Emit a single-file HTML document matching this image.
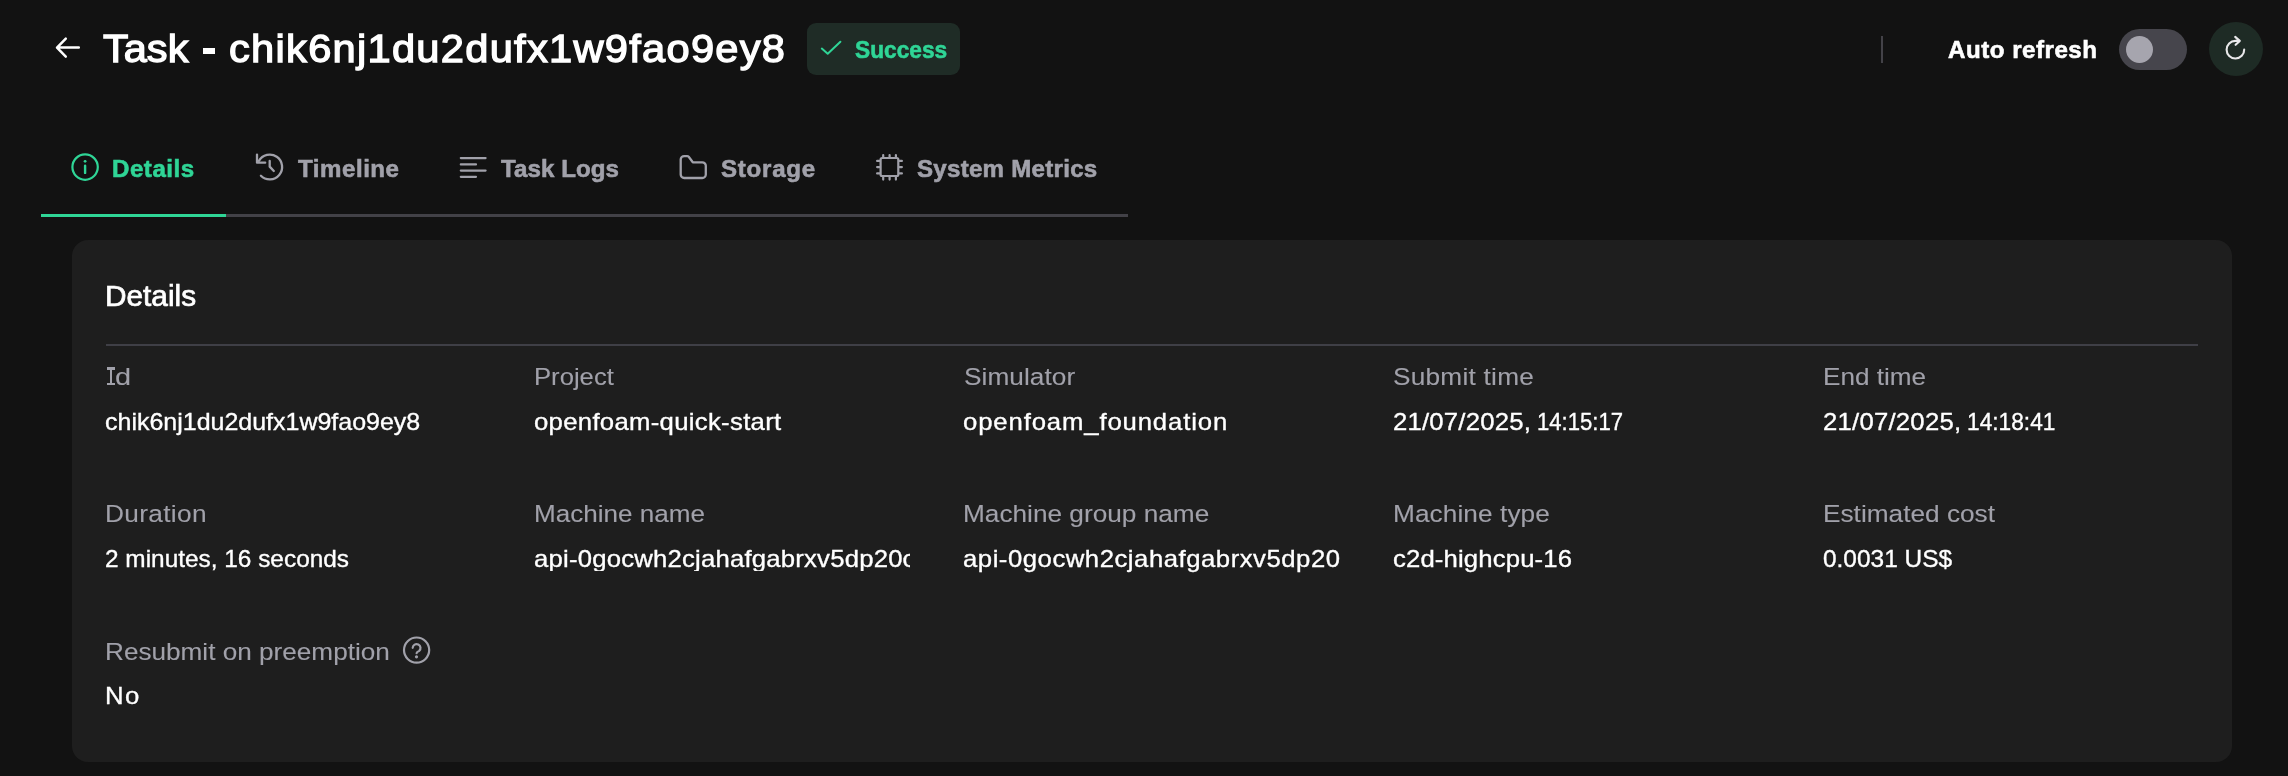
<!DOCTYPE html>
<html><head><meta charset="utf-8"><title>Task</title>
<style>
html,body{margin:0;padding:0;background:#121212;}
body{width:2288px;height:776px;position:relative;overflow:hidden;font-family:"Liberation Sans",sans-serif;}
.t{position:absolute;white-space:nowrap;line-height:1;display:block;will-change:transform;}
.t span{display:inline-block;transform-origin:0 50%;line-height:1;}
.a{position:absolute;display:block;}
</style></head><body>
<!-- title hyphen -->
<div class="a" style="left:202.8px;top:48.3px;width:12.5px;height:5.4px;background:#fff"></div>
<!-- success badge -->
<div class="a" style="left:807px;top:23px;width:153px;height:52px;border-radius:9px;background:#1f2c26"></div>
<!-- separator -->
<div class="a" style="left:1881px;top:36px;width:2px;height:27px;background:#434248"></div>
<!-- toggle -->
<div class="a" style="left:2119px;top:29px;width:68px;height:41px;border-radius:20.5px;background:#46454c"></div>
<div class="a" style="left:2126px;top:36px;width:27px;height:27px;border-radius:50%;background:#a6a5ae"></div>
<!-- refresh button -->
<div class="a" style="left:2209px;top:22px;width:54px;height:54px;border-radius:50%;background:#1e2b25"></div>
<!-- tab underline -->
<div class="a" style="left:41px;top:213.5px;width:1087px;height:3px;background:#424147"></div>
<div class="a" style="left:41px;top:213.5px;width:185px;height:3px;background:#2fd596"></div>
<!-- card -->
<div class="a" style="left:72px;top:240px;width:2160px;height:522px;border-radius:16px;background:#1e1e1e"></div>
<div class="a" style="left:106px;top:344px;width:2092px;height:2px;background:#3f3f46"></div>
<!-- slab I of "Id" -->
<div class="a" style="left:106.8px;top:367.3px;width:8.4px;height:2.3px;background:#a1a1aa"></div>
<div class="a" style="left:106.8px;top:382.9px;width:8.4px;height:2.3px;background:#a1a1aa"></div>
<div class="a" style="left:109.8px;top:367.3px;width:2.5px;height:17.9px;background:#a1a1aa"></div>
<!-- icons -->
<svg class="a" style="left:0;top:0" width="2288" height="776" viewBox="0 0 2288 776" fill="none" stroke-linecap="round" stroke-linejoin="round">
<!-- back arrow -->
<path d="M78.8 47.6H57.2M65.8 38.6L57 47.6L65.8 56.6" stroke="#fff" stroke-width="2.5"/>
<!-- check -->
<path d="M821.8 48.6L827.7 53.8L840.4 41.8" stroke="#2fd596" stroke-width="2"/>
<!-- refresh icon -->
<path d="M2244.2 49.5A8.8 8.8 0 1 1 2235.4 40.9H2239.6M2235.2 36.9L2239.8 40.9L2235.6 44.8" stroke="#e8e8ea" stroke-width="2.1"/>
<!-- info -->
<g stroke="#2fd596" stroke-width="2.2"><circle cx="85.1" cy="167.1" r="12.7"/><path d="M85.1 165.7V172.9" stroke-width="2.4"/><circle cx="85.1" cy="161.3" r="1.4" fill="#2fd596" stroke="none"/></g>
<!-- history -->
<g stroke="#a1a1aa" stroke-width="2.3"><path d="M258.9 160.9A12.4 12.4 0 1 1 260.9 175.7"/><path d="M257 154.6V162.7H265.2"/><path d="M269.7 160.9V166.6L273.8 171"/></g>
<!-- logs -->
<path d="M460.8 158.1H485.6M460.8 164.4H476M460.8 170.6H485.6M460.8 176.8H476" stroke="#a1a1aa" stroke-width="2.2"/>
<!-- folder -->
<path d="M680.7 159.6a3.5 3.5 0 0 1 3.5-3.5H687.2a2 2 0 0 1 1.5.7L692.8 162.3H702.3a3.5 3.5 0 0 1 3.5 3.5V174.5a3.5 3.5 0 0 1-3.5 3.5H684.2a3.5 3.5 0 0 1-3.5-3.5Z" stroke="#a1a1aa" stroke-width="2.3"/>
<!-- cpu -->
<g stroke="#a1a1aa" stroke-width="2.2"><rect x="880.6" y="158" width="17.7" height="18" rx="1.5"/><path d="M883.2 155V157M889.6 155V157M895.9 155V157M883.2 177.2V179.6M889.6 177.2V179.6M895.9 177.2V179.6M877.1 160.9H879.5M877.1 167.1H879.5M877.1 173.4H879.5M899.5 160.9H901.9M899.5 167.1H901.9M899.5 173.4H901.9"/></g>
<!-- help -->
<g stroke="#a1a1aa" stroke-width="2.2"><circle cx="416.6" cy="650.1" r="12.6"/><path d="M412.7 647.8A3.9 3.9 0 1 1 419.2 650.9C417.5 651.9 416.6 652.2 416.6 653.2"/><circle cx="416.5" cy="656.8" r="1.6" fill="#a1a1aa" stroke="none"/></g>
</svg>
<div class="t" style="left:103.00px;top:29.87px;"><span id="t0" style="font-size:38.9px;font-weight:normal;color:#ffffff;letter-spacing:0.000px;-webkit-text-stroke:1.3px #ffffff;transform:scaleX(1.068);">Task</span></div>
<div class="t" style="left:229.20px;top:29.87px;"><span id="t1" style="font-size:38.9px;font-weight:normal;color:#ffffff;letter-spacing:1.200px;-webkit-text-stroke:1.3px #ffffff;transform:scaleX(1.07);">chik6nj1du2dufx1w9fao9ey8</span></div>
<div class="t" style="left:855.00px;top:37.90px;"><span id="t2" style="font-size:24.1px;font-weight:bold;color:#2fd596;letter-spacing:0.001px;-webkit-text-stroke:0.6px #2fd596;transform:scaleX(0.9428);">Success</span></div>
<div class="t" style="left:1948.00px;top:37.90px;"><span id="t3" style="font-size:24.1px;font-weight:bold;color:#ffffff;letter-spacing:0.523px;-webkit-text-stroke:0.6px #ffffff;">Auto refresh</span></div>
<div class="t" style="left:112.00px;top:157.10px;"><span id="t4" style="font-size:24.1px;font-weight:bold;color:#2fd596;letter-spacing:0.536px;-webkit-text-stroke:0.6px #2fd596;">Details</span></div>
<div class="t" style="left:298.00px;top:157.10px;"><span id="t5" style="font-size:24.1px;font-weight:bold;color:#a1a1aa;letter-spacing:0.528px;-webkit-text-stroke:0.6px #a1a1aa;">Timeline</span></div>
<div class="t" style="left:501.00px;top:157.10px;"><span id="t6" style="font-size:24.1px;font-weight:bold;color:#a1a1aa;letter-spacing:0.079px;-webkit-text-stroke:0.6px #a1a1aa;">Task Logs</span></div>
<div class="t" style="left:721.00px;top:157.10px;"><span id="t7" style="font-size:24.1px;font-weight:bold;color:#a1a1aa;letter-spacing:0.748px;-webkit-text-stroke:0.6px #a1a1aa;">Storage</span></div>
<div class="t" style="left:917.00px;top:157.10px;"><span id="t8" style="font-size:24.1px;font-weight:bold;color:#a1a1aa;letter-spacing:0.263px;-webkit-text-stroke:0.6px #a1a1aa;">System Metrics</span></div>
<div class="t" style="left:105.40px;top:281.69px;"><span id="t9" style="font-size:28.6px;font-weight:normal;color:#ffffff;letter-spacing:-0.000px;-webkit-text-stroke:0.7px #ffffff;transform:scaleX(1.042);">Details</span></div>
<div class="t" style="left:534.20px;top:364.56px;"><span id="t10" style="font-size:24.5px;font-weight:normal;color:#a1a1aa;letter-spacing:0.000px;-webkit-text-stroke:0.1px #a1a1aa;transform:scaleX(1.047);">Project</span></div>
<div class="t" style="left:964.20px;top:364.56px;"><span id="t11" style="font-size:24.5px;font-weight:normal;color:#a1a1aa;letter-spacing:0.057px;-webkit-text-stroke:0.1px #a1a1aa;transform:scaleX(1.07);">Simulator</span></div>
<div class="t" style="left:1393.40px;top:364.56px;"><span id="t12" style="font-size:24.5px;font-weight:normal;color:#a1a1aa;letter-spacing:0.227px;-webkit-text-stroke:0.1px #a1a1aa;transform:scaleX(1.07);">Submit time</span></div>
<div class="t" style="left:1823.20px;top:364.56px;"><span id="t13" style="font-size:24.5px;font-weight:normal;color:#a1a1aa;letter-spacing:0.001px;-webkit-text-stroke:0.1px #a1a1aa;transform:scaleX(1.0662);">End time</span></div>
<div class="t" style="left:115.40px;top:364.56px;"><span id="t14" style="font-size:24.5px;font-weight:normal;color:#a1a1aa;letter-spacing:0.000px;-webkit-text-stroke:0.1px #a1a1aa;transform:scaleX(1.1806);">d</span></div>
<div class="t" style="left:105.00px;top:409.68px;"><span id="t15" style="font-size:24px;font-weight:normal;color:#ffffff;letter-spacing:0.000px;-webkit-text-stroke:0.35px #ffffff;transform:scaleX(1.0406);">chik6nj1du2dufx1w9fao9ey8</span></div>
<div class="t" style="left:534.00px;top:409.68px;"><span id="t16" style="font-size:24px;font-weight:normal;color:#ffffff;letter-spacing:0.294px;-webkit-text-stroke:0.35px #ffffff;transform:scaleX(1.07);">openfoam-quick-start</span></div>
<div class="t" style="left:963.00px;top:409.68px;"><span id="t17" style="font-size:24px;font-weight:normal;color:#ffffff;letter-spacing:0.818px;-webkit-text-stroke:0.35px #ffffff;transform:scaleX(1.07);">openfoam_foundation</span></div>
<div class="t" style="left:1393.00px;top:409.68px;"><span id="t18" style="font-size:24px;font-weight:normal;color:#ffffff;letter-spacing:0.205px;-webkit-text-stroke:0.35px #ffffff;transform:scaleX(1.07);">21/07/2025,</span></div>
<div class="t" style="left:1536.80px;top:409.68px;"><span id="t19" style="font-size:24px;font-weight:normal;color:#ffffff;letter-spacing:-0.000px;-webkit-text-stroke:0.35px #ffffff;transform:scaleX(0.9209);">14:15:17</span></div>
<div class="t" style="left:1823.00px;top:409.68px;"><span id="t20" style="font-size:24px;font-weight:normal;color:#ffffff;letter-spacing:0.224px;-webkit-text-stroke:0.35px #ffffff;transform:scaleX(1.07);">21/07/2025,</span></div>
<div class="t" style="left:1966.80px;top:409.68px;"><span id="t21" style="font-size:24px;font-weight:normal;color:#ffffff;letter-spacing:0.001px;-webkit-text-stroke:0.35px #ffffff;transform:scaleX(0.9466);">14:18:41</span></div>
<div class="t" style="left:104.80px;top:501.56px;"><span id="t22" style="font-size:24.5px;font-weight:normal;color:#a1a1aa;letter-spacing:0.323px;-webkit-text-stroke:0.1px #a1a1aa;transform:scaleX(1.07);">Duration</span></div>
<div class="t" style="left:534.20px;top:501.56px;"><span id="t23" style="font-size:24.5px;font-weight:normal;color:#a1a1aa;letter-spacing:0.001px;-webkit-text-stroke:0.1px #a1a1aa;transform:scaleX(1.0645);">Machine name</span></div>
<div class="t" style="left:963.00px;top:501.56px;"><span id="t24" style="font-size:24.5px;font-weight:normal;color:#a1a1aa;letter-spacing:0.000px;-webkit-text-stroke:0.1px #a1a1aa;transform:scaleX(1.0698);">Machine group name</span></div>
<div class="t" style="left:1393.20px;top:501.56px;"><span id="t25" style="font-size:24.5px;font-weight:normal;color:#a1a1aa;letter-spacing:0.078px;-webkit-text-stroke:0.1px #a1a1aa;transform:scaleX(1.07);">Machine type</span></div>
<div class="t" style="left:1823.20px;top:501.56px;"><span id="t26" style="font-size:24.5px;font-weight:normal;color:#a1a1aa;letter-spacing:0.006px;-webkit-text-stroke:0.1px #a1a1aa;transform:scaleX(1.07);">Estimated cost</span></div>
<div class="t" style="left:105.00px;top:546.68px;"><span id="t27" style="font-size:24px;font-weight:normal;color:#ffffff;letter-spacing:0.000px;-webkit-text-stroke:0.35px #ffffff;transform:scaleX(1.0161);">2 minutes, 16 seconds</span></div>
<div class="t" style="left:534.40px;top:546.68px;width:375.5px;overflow:hidden;"><span id="t28" style="font-size:24px;font-weight:normal;color:#ffffff;letter-spacing:0.200px;-webkit-text-stroke:0.35px #ffffff;transform:scaleX(1.07);">api-0gocwh2cjahafgabrxv5dp20c</span></div>
<div class="t" style="left:963.00px;top:546.68px;"><span id="t29" style="font-size:24px;font-weight:normal;color:#ffffff;letter-spacing:0.498px;-webkit-text-stroke:0.35px #ffffff;transform:scaleX(1.07);">api-0gocwh2cjahafgabrxv5dp20</span></div>
<div class="t" style="left:1393.00px;top:546.68px;"><span id="t30" style="font-size:24px;font-weight:normal;color:#ffffff;letter-spacing:0.143px;-webkit-text-stroke:0.35px #ffffff;transform:scaleX(1.07);">c2d-highcpu-16</span></div>
<div class="t" style="left:1823.00px;top:546.68px;"><span id="t31" style="font-size:24px;font-weight:normal;color:#ffffff;letter-spacing:-0.000px;-webkit-text-stroke:0.35px #ffffff;transform:scaleX(1.0178);">0.0031 US$</span></div>
<div class="t" style="left:104.80px;top:640.16px;"><span id="t32" style="font-size:24.5px;font-weight:normal;color:#a1a1aa;letter-spacing:0.000px;-webkit-text-stroke:0.1px #a1a1aa;transform:scaleX(1.0671);">Resubmit on preemption</span></div>
<div class="t" style="left:104.80px;top:683.68px;"><span id="t33" style="font-size:24px;font-weight:normal;color:#ffffff;letter-spacing:1.298px;-webkit-text-stroke:0.35px #ffffff;transform:scaleX(1.07);">No</span></div>
</body></html>
